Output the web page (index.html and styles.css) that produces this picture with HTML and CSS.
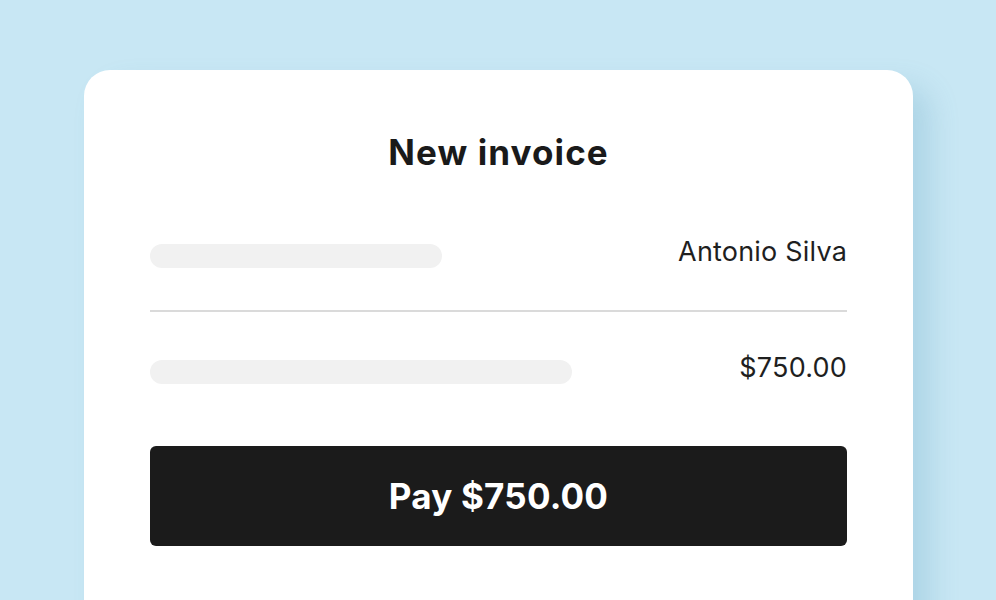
FILE: index.html
```html
<!DOCTYPE html>
<html lang="en">
<head>
<meta charset="utf-8">
<title>New invoice</title>
<link rel="stylesheet" href="styles.css">
</head>
<body>
<main class="stage">
  <section class="card">
    <h1 class="title">New invoice</h1>
    <div class="row">
      <span class="bar bar-short"></span>
      <span class="value">Antonio Silva</span>
    </div>
    <hr class="divider">
    <div class="row row-second">
      <span class="bar bar-long"></span>
      <span class="value">$750.00</span>
    </div>
    <button class="pay" type="button">Pay $750.00</button>
  </section>
</main>
</body>
</html>
```

FILE: styles.css
```css
html, body {
  margin: 0;
  padding: 0;
  height: 100%;
  overflow: hidden;
}

body {
  background: #c8e7f4;
  font-family: Inter, "Noto Sans", "Liberation Sans", sans-serif;
  color: #1c1c1c;
}

.stage {
  padding: 70px 0 0 84px;
}

.card {
  width: 829px;
  height: 600px;
  box-sizing: border-box;
  padding: 0 66px;
  background: #ffffff;
  border-radius: 26px;
  box-shadow: 18px 16px 28px rgba(80, 150, 180, 0.22);
  display: flex;
  flex-direction: column;
}

.title {
  margin: 0;
  padding-top: 62px;
  font-size: 35px;
  line-height: 40px;
  font-weight: 700;
  text-align: center;
  letter-spacing: 1.1px;
  color: #1a1a1a;
}

.row {
  display: flex;
  align-items: center;
  justify-content: space-between;
  height: 24px;
  margin-top: 72px;
}

.row-second {
  margin-top: 48px;
}

.bar {
  display: block;
  height: 24px;
  border-radius: 12px;
  background: #f1f1f1;
}

.bar-short { width: 292px; }
.bar-long { width: 422px; }

.value {
  font-size: 27px;
  line-height: 24px;
  font-weight: 400;
  color: #1f1f1f;
  margin-bottom: 8px;
  letter-spacing: 0.2px;
}

.divider {
  margin: 42px 0 0;
  border: 0;
  height: 2px;
  background: #dadada;
}

.pay {
  margin-top: 62px;
  height: 100px;
  border: 0;
  border-radius: 6px;
  background: #1b1b1b;
  color: #ffffff;
  font-family: inherit;
  font-size: 35px;
  font-weight: 700;
  letter-spacing: 0.2px;
  cursor: pointer;
}
```
